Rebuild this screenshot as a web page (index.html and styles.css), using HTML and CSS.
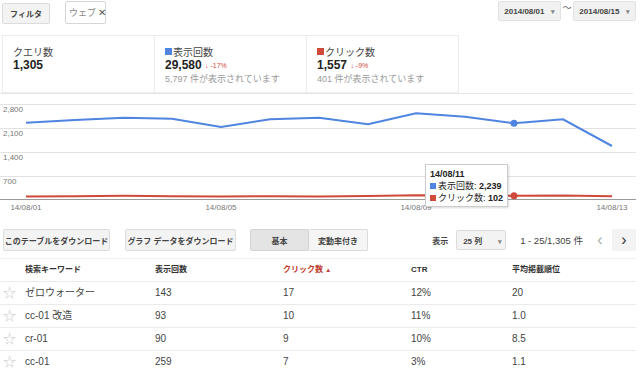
FILE: index.html
```html
<!DOCTYPE html>
<html lang="ja">
<head>
  <meta charset="UTF-8" />
  <title>検索クエリ</title>
  <link rel="stylesheet" href="styles.css">
</head>
<body>
  <div class="toolbar">
    <button class="btn filter-btn">フィルタ</button>
    <span class="chip">ウェブ <span class="chip-x">✕</span></span>
    <div class="dates">
      <button class="btn date-btn">2014/08/01 <span class="caret">▾</span></button>
      <span class="tilde">〜</span>
      <button class="btn date-btn">2014/08/15 <span class="caret">▾</span></button>
    </div>
  </div>

  <div class="summary">
    <div class="stats">
      <div class="stat">
        <div class="stat-label">クエリ数</div>
        <div class="stat-value">1,305</div>
      </div>
      <div class="stat">
        <div class="stat-label"><span class="sq blue"></span>表示回数</div>
        <div class="stat-value">29,580 <span class="delta">&#x2193; -17%</span></div>
        <div class="stat-sub">5,797 件が表示されています</div>
      </div>
      <div class="stat">
        <div class="stat-label"><span class="sq red"></span>クリック数</div>
        <div class="stat-value">1,557 <span class="delta">&#x2193; -9%</span></div>
        <div class="stat-sub">401 件が表示されています</div>
      </div>
    </div>
  </div>

  <div class="chart">
    <svg width="640" height="120" viewBox="0 0 640 120">
      <g stroke="#e2e2e2" stroke-width="1">
        <line x1="0" y1="7.5" x2="636" y2="7.5"/>
        <line x1="0" y1="31.5" x2="636" y2="31.5"/>
        <line x1="0" y1="55.5" x2="636" y2="55.5"/>
        <line x1="0" y1="79.5" x2="636" y2="79.5"/>
      </g>
      <line x1="0" y1="102.5" x2="636" y2="102.5" stroke="#9a9a9a" stroke-width="1"/>
      <g class="axis-text">
        <text x="3" y="15">2,800</text>
        <text x="3" y="39">2,100</text>
        <text x="3" y="63">1,400</text>
        <text x="3" y="87">700</text>
        <text x="26" y="113" text-anchor="middle">14/08/01</text>
        <text x="221" y="113" text-anchor="middle">14/08/05</text>
        <text x="416" y="113" text-anchor="middle">14/08/09</text>
        <text x="612" y="113" text-anchor="middle">14/08/13</text>
      </g>
      <polyline fill="none" stroke="#cf4a3a" stroke-width="2" points="26,99.5 75,99.2 124,98.8 172,99.3 221,99.6 270,99.2 319,99.4 368,99 416,98.2 465,98.6 514,98.8 563,98.4 612,99.3"/>
      <polyline fill="none" stroke="#4f85e0" stroke-width="2" points="26,25.7 75,23 124,20.7 172,21.7 221,30 270,22.3 319,20.7 368,27.3 416,16.3 465,19.7 514,26.3 563,22.3 612,49"/>
      <circle cx="514" cy="26.3" r="3.5" fill="#4f85e0"/>
      <circle cx="514" cy="98.8" r="3.5" fill="#cf4a3a"/>
    </svg>
    <div class="tooltip">
      <div class="tt-date">14/08/11</div>
      <div><span class="tt-sq blue"></span>表示回数: <b>2,239</b></div>
      <div><span class="tt-sq red"></span>クリック数: <b>102</b></div>
    </div>
  </div>

  <div class="controls">
    <button class="btn dl-btn">このテーブルをダウンロード</button>
    <button class="btn dl-btn">グラフ データをダウンロード</button>
    <div class="toggle">
      <button class="btn tog-btn active">基本</button>
      <button class="btn tog-btn">変動率付き</button>
    </div>
    <div class="pager">
      <span class="show-label">表示</span>
      <button class="btn rows-btn">25 列 <span class="caret">▾</span></button>
      <span class="range">1 - 25/1,305 件</span>
      <button class="btn nav-btn prev">&#x2039;</button>
      <button class="btn nav-btn">&#x203A;</button>
    </div>
  </div>

  <table class="data">
    <thead>
      <tr>
        <th class="c-star"></th>
        <th class="c-kw">検索キーワード</th>
        <th class="c-imp">表示回数</th>
        <th class="c-clk sorted">クリック数 <span class="sort">▲</span></th>
        <th class="c-ctr">CTR</th>
        <th class="c-pos">平均掲載順位</th>
      </tr>
    </thead>
    <tbody>
      <tr><td class="c-star">☆</td><td>ゼロウォーター</td><td>143</td><td>17</td><td>12%</td><td>20</td></tr>
      <tr><td class="c-star">☆</td><td>cc-01 改造</td><td>93</td><td>10</td><td>11%</td><td>1.0</td></tr>
      <tr><td class="c-star">☆</td><td>cr-01</td><td>90</td><td>9</td><td>10%</td><td>8.5</td></tr>
      <tr><td class="c-star">☆</td><td>cc-01</td><td>259</td><td>7</td><td>3%</td><td>1.1</td></tr>
    </tbody>
  </table>
</body>
</html>
```

FILE: styles.css
```css
body {
  margin: 0;
  font-family: "Liberation Sans", Arial, "Noto Sans CJK JP", sans-serif;
  font-size: 11px;
  color: #333;
  background: #fff;
  width: 640px;
  overflow: hidden;
  white-space: nowrap;
}

.btn {
  font-family: inherit;
  background: #f3f3f3;
  border: 1px solid #dcdcdc;
  border-radius: 2px;
  color: #444;
  font-weight: bold;
  font-size: 8px;
  padding: 0;
  white-space: nowrap;
  cursor: pointer;
}

/* top toolbar */
.toolbar {
  display: flex;
  align-items: flex-start;
  height: 35px;
}

.filter-btn {
  margin: 3px 0 0 2px;
  width: 48px;
  height: 21px;
}

.chip {
  margin: 1px 0 0 15px;
  width: 41px;
  height: 23px;
  box-sizing: border-box;
  border: 1px solid #d6d6d6;
  border-radius: 2px;
  color: #888;
  font-size: 9px;
  display: flex;
  align-items: center;
  padding-left: 3px;
}

.chip-x {
  color: #555;
  font-size: 10px;
  margin-left: 2px;
}

.dates {
  margin: 1px 4px 0 auto;
  display: flex;
  align-items: flex-start;
}

.date-btn {
  width: 63px;
  height: 20px;
  background: #f1f1f1;
  border-color: #e2e2e2;
  font-size: 8px;
}

.caret {
  color: #888;
  font-size: 7px;
  margin-left: 4px;
}

.tilde {
  width: 12px;
  text-align: center;
  color: #666;
  font-size: 9px;
  line-height: 14px;
}

/* summary */
.summary {
  width: 633px;
  border-bottom: 1px solid #e6e6e6;
}

.stats {
  display: flex;
  margin-left: 2px;
  width: 455px;
  height: 56px;
  border: 1px solid #ececec;
}

.stat {
  flex: 1;
  padding: 9px 0 0 10px;
  border-right: 1px solid #ececec;
}

.stat:last-child {
  border-right: none;
}

.stat-label {
  font-size: 10px;
  color: #444;
  display: flex;
  align-items: center;
  height: 13px;
}

.sq {
  width: 7px;
  height: 7px;
  margin-right: 1px;
}

.blue { background: #4f85e0; }
.red { background: #cf4a3a; }

.stat-value {
  font-size: 12px;
  font-weight: bold;
  color: #222;
  line-height: 14px;
}

.delta {
  font-size: 7px;
  font-weight: normal;
  color: #cf4a3a;
  vertical-align: 1px;
}

.stat-sub {
  font-size: 9px;
  color: #999;
  line-height: 13px;
}

/* chart */
.chart {
  position: relative;
  margin-top: 3px;
  height: 120px;
}

.chart svg {
  display: block;
}

.axis-text {
  font-family: "Liberation Sans", Arial, sans-serif;
  font-size: 8px;
  fill: #777;
}

.tooltip {
  position: absolute;
  left: 425px;
  top: 67px;
  height: 43px;
  box-sizing: border-box;
  background: #fff;
  border: 1px solid #ccc;
  box-shadow: 1px 1px 2px rgba(0, 0, 0, 0.15);
  padding: 3px 4px 0 4px;
  font-size: 9px;
  line-height: 12px;
  color: #222;
}

.tt-date {
  font-weight: bold;
}

.tt-sq {
  display: inline-block;
  width: 6px;
  height: 6px;
  margin-right: 2px;
}

/* buttons row */
.controls {
  display: flex;
  align-items: center;
  margin-top: 12px;
  height: 22px;
}

.dl-btn {
  height: 22px;
  margin-left: 3px;
  width: 107px;
}

.dl-btn + .dl-btn {
  margin-left: 15px;
  width: 111px;
}

.toggle {
  display: flex;
  margin-left: 14px;
}

.tog-btn {
  height: 22px;
  width: 59px;
  background: #f5f5f5;
}

.tog-btn.active {
  background: #e4e4e4;
  border-color: #d4d4d4;
}

.tog-btn + .tog-btn {
  border-left: none;
}

.pager {
  display: flex;
  align-items: center;
  margin-left: auto;
  margin-right: 4px;
}

.show-label {
  font-size: 8px;
  font-weight: bold;
  color: #444;
  margin-right: 8px;
}

.rows-btn {
  width: 50px;
  height: 20px;
  text-align: left;
  padding-left: 6px;
  font-size: 8px;
}

.rows-btn .caret {
  margin-left: 14px;
}

.range {
  margin-left: 14px;
  margin-right: 5px;
  font-size: 9.5px;
  color: #444;
}

.nav-btn {
  width: 24px;
  height: 22px;
  font-size: 16px;
  font-weight: normal;
  color: #333;
  background: #f3f3f3;
  border: none;
}

.nav-btn.prev {
  background: #fff;
  color: #aaa;
}

/* table */
.data {
  margin-top: 7px;
  width: 636px;
  border-collapse: collapse;
  border-top: 1px solid #f0f0f0;
}

.data th,
.data td {
  text-align: left;
  padding: 0 0 0 3px;
  height: 22px;
  line-height: 12px;
  border-bottom: 1px solid #ebebeb;
}

.data th {
  font-size: 8px;
  font-weight: bold;
  color: #333;
}

.data td {
  font-size: 10px;
  color: #444;
}

.data .c-star {
  width: 19px;
  color: #ccc;
  font-size: 13px;
  padding-left: 3px;
}

.c-kw { width: 127px; }
.c-imp { width: 125px; }
.c-clk { width: 125px; }
.c-ctr { width: 98px; }

.data th.sorted {
  color: #c0392b;
}

.sort {
  font-size: 6px;
  color: #c0392b;
}
```
